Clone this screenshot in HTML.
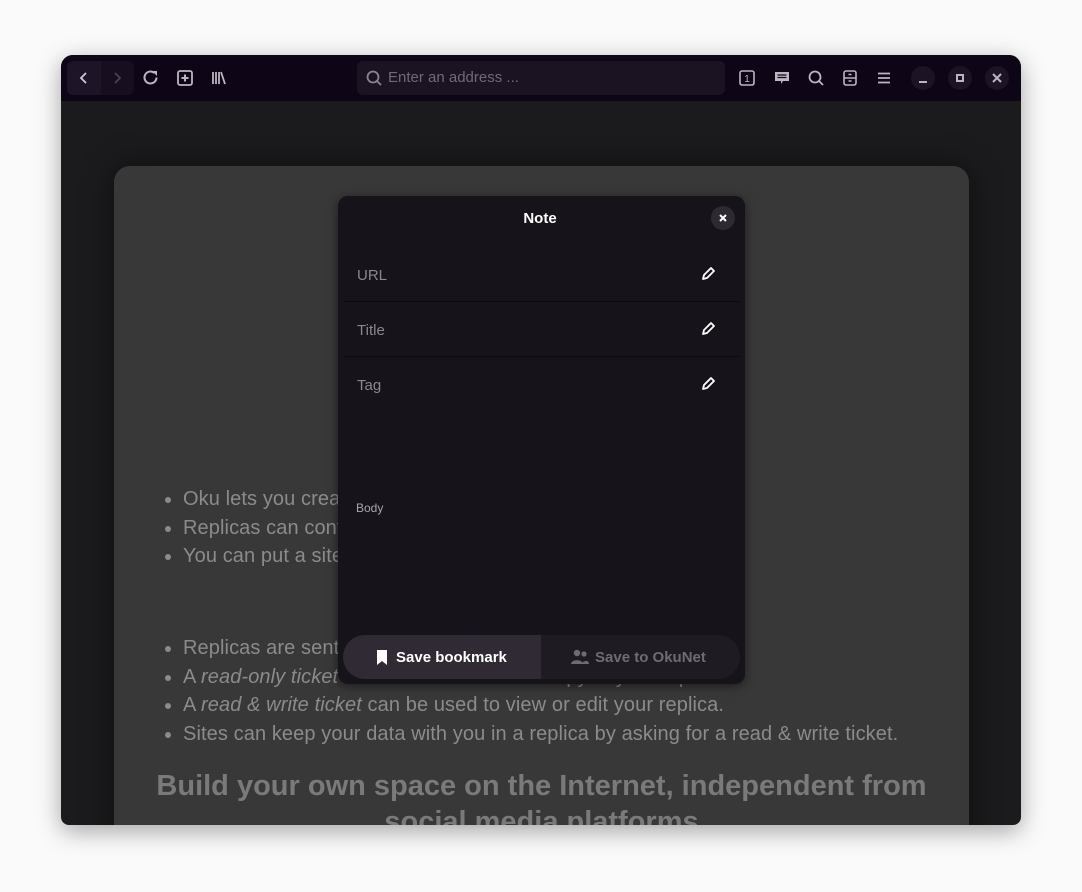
<!DOCTYPE html>
<html><head><meta charset="utf-8"><style>
*{box-sizing:border-box;margin:0;padding:0}
body{width:1082px;height:892px;background:#fafafa;font-family:"Liberation Sans",sans-serif;position:relative;overflow:hidden}
.win{position:absolute;left:61px;top:55px;width:960px;height:770px;border-radius:12px 12px 8px 8px;overflow:hidden;background:#1b1b1d;box-shadow:0 6px 24px rgba(0,0,0,.35)}
.hdr{position:absolute;left:0;top:0;width:960px;height:46px;background:#0e0517}
.ic{position:absolute;top:13px;width:20px;height:20px}
.card{position:absolute;left:53px;top:111px;width:855px;height:700px;background:#383839;border-radius:16px;box-shadow:0 0 30px rgba(0,0,0,.5)}
.t{position:absolute;left:122px;color:#8b8b8c;font-size:20px;letter-spacing:0.1px;white-space:nowrap}
.t:before{content:"";position:absolute;left:-18px;top:9px;width:6px;height:6px;border-radius:3px;background:#8b8b8c}
.h{position:absolute;left:53px;width:855px;text-align:center;color:#7a7a7b;font-size:29px;font-weight:bold}
.modal{position:absolute;left:277px;top:141px;width:407px;height:488px;background:#17131a;border-radius:10px;box-shadow:0 2px 10px rgba(0,0,0,.5)}
.row{position:absolute;left:6px;width:395px;height:55px;border-bottom:1px solid #0c090e;color:#8a878d;font-size:15px}
.row span{position:absolute;left:13px;top:20px}
.row svg{position:absolute;right:23px;top:19px}
</style></head><body>
<div class="win">
 <div class="hdr">
  <div style="position:absolute;left:6px;top:6px;width:67px;height:34px;border-radius:6px;background:#170f20"></div>
  <div style="position:absolute;left:6px;top:6px;width:34px;height:34px;border-radius:6px 0 0 6px;background:#1d1527"></div>
  <svg class="ic" style="left:13px" viewBox="0 0 20 20"><path d="M12 5l-5 5 5 5" stroke="#cfcbd3" stroke-width="1.8" fill="none"/></svg>
  <svg class="ic" style="left:46px" viewBox="0 0 20 20"><path d="M8 5l5 5-5 5" stroke="#4a4452" stroke-width="1.8" fill="none"/></svg>
  <svg class="ic" style="left:80px" viewBox="0 0 20 20"><path d="M15.5 9.5A6 6 0 1 1 13.5 5" stroke="#bbb6c0" stroke-width="2" fill="none"/><path d="M11 3h5v5z" fill="#bbb6c0"/></svg>
  <svg class="ic" style="left:114px" viewBox="0 0 20 20"><rect x="3" y="3" width="14" height="14" rx="2" stroke="#bbb6c0" stroke-width="1.8" fill="none"/><path d="M10 6.5v7M6.5 10h7" stroke="#bbb6c0" stroke-width="2"/></svg>
  <svg class="ic" style="left:148px" viewBox="0 0 20 20"><path d="M4 4v12M7 4v12M10 4v12M12 4l4 12" stroke="#bbb6c0" stroke-width="1.8"/></svg>
  <div style="position:absolute;left:296px;top:6px;width:368px;height:34px;border-radius:6px;background:#1b1322"></div>
  <svg class="ic" style="left:303px" viewBox="0 0 20 20"><circle cx="9" cy="9" r="5.5" stroke="#8a8590" stroke-width="1.8" fill="none"/><path d="M13 13l4 4" stroke="#8a8590" stroke-width="1.8"/></svg>
  <div style="position:absolute;left:327px;top:14px;color:#6f6a75;font-size:15px">Enter an address ...</div>
  <svg class="ic" style="left:676px" viewBox="0 0 20 20"><rect x="3" y="3" width="14" height="14" rx="2" stroke="#bbb6c0" stroke-width="1.6" fill="none"/><text x="10" y="14" font-size="10" fill="#bbb6c0" text-anchor="middle" font-family="Liberation Sans">1</text></svg>
  <svg class="ic" style="left:711px" viewBox="0 0 20 20"><path d="M3 4h14v9h-6l-2 3v-3H3z" fill="#bbb6c0"/><path d="M5.5 7h9M5.5 9.5h9" stroke="#0e0517" stroke-width="1.2"/></svg>
  <svg class="ic" style="left:745px" viewBox="0 0 20 20"><circle cx="9" cy="9" r="5.5" stroke="#bbb6c0" stroke-width="1.8" fill="none"/><path d="M13 13l4 4" stroke="#bbb6c0" stroke-width="1.8"/></svg>
  <svg class="ic" style="left:779px" viewBox="0 0 20 20"><rect x="4" y="3" width="12" height="14" rx="2" stroke="#bbb6c0" stroke-width="1.6" fill="none"/><path d="M4 10h12M8.5 6.5h3M8.5 13h3" stroke="#bbb6c0" stroke-width="1.4"/></svg>
  <svg class="ic" style="left:813px" viewBox="0 0 20 20"><path d="M4 5.5h12M4 10h12M4 14.5h12" stroke="#bbb6c0" stroke-width="1.8"/></svg>
  <div style="position:absolute;left:850px;top:11px;width:24px;height:24px;border-radius:12px;background:#1c1424"></div>
  <div style="position:absolute;left:858px;top:26px;width:8px;height:2px;background:#bbb6c0"></div>
  <div style="position:absolute;left:887px;top:11px;width:24px;height:24px;border-radius:12px;background:#1c1424"></div>
  <div style="position:absolute;left:895px;top:19px;width:8px;height:8px;border:2px solid #bbb6c0"></div>
  <div style="position:absolute;left:924px;top:11px;width:24px;height:24px;border-radius:12px;background:#1c1424"></div>
  <svg style="position:absolute;left:931px;top:18px" width="10" height="10"><path d="M1 1l8 8M9 1l-8 8" stroke="#bbb6c0" stroke-width="2"/></svg>
 </div>
 <div class="card"></div>
 <div class="t" style="top:433px">Oku lets you create replicas and put a site online.</div>
 <div class="t" style="top:462px">Replicas can contain any number of files and documents.</div>
 <div class="t" style="top:490px">You can put a site online with a replica.</div>
 <div class="t" style="top:582px">Replicas are sent to others with tickets.</div>
 <div class="t" style="top:611px">A <i>read-only ticket</i> can be used to view a copy of your replica.</div>
 <div class="t" style="top:639px">A <i>read &amp; write ticket</i> can be used to view or edit your replica.</div>
 <div class="t" style="top:668px">Sites can keep your data with you in a replica by asking for a read &amp; write ticket.</div>
 <div class="h" style="top:715px">Build your own space on the Internet, independent from</div>
 <div class="h" style="top:751px">social media platforms</div>
 <div class="modal">
  <div style="position:absolute;left:0;width:404px;top:14px;text-align:center;color:#fff;font-weight:bold;font-size:15px">Note</div>
  <div style="position:absolute;left:373px;top:10px;width:24px;height:24px;border-radius:12px;background:#2e2a32"></div>
  <svg style="position:absolute;left:381px;top:18px" width="8" height="8"><path d="M1 1l6 6M7 1l-6 6" stroke="#fff" stroke-width="2"/></svg>
  <div class="row" style="top:51px"><span>URL</span><svg width="16" height="16" viewBox="0 0 16 16"><path d="M3 13l1-4 7-7 3 3-7 7z" stroke="#fff" stroke-width="1.8" fill="none" stroke-linejoin="round"/></svg></div>
  <div class="row" style="top:106px"><span>Title</span><svg width="16" height="16" viewBox="0 0 16 16"><path d="M3 13l1-4 7-7 3 3-7 7z" stroke="#fff" stroke-width="1.8" fill="none" stroke-linejoin="round"/></svg></div>
  <div class="row" style="top:161px;border:none"><span>Tag</span><svg width="16" height="16" viewBox="0 0 16 16"><path d="M3 13l1-4 7-7 3 3-7 7z" stroke="#fff" stroke-width="1.8" fill="none" stroke-linejoin="round"/></svg></div>
  <div style="position:absolute;left:18px;top:305px;color:#a8a5ab;font-size:12px">Body</div>
  <div style="position:absolute;left:5px;top:439px;width:397px;height:44px;border-radius:22px;background:#1f1b23;overflow:hidden">
   <div style="position:absolute;left:0;top:0;width:198px;height:44px;background:#2f2a33"></div>
   <svg style="position:absolute;left:33px;top:14px" width="12" height="16"><path d="M1 1h10v15l-5-4-5 4z" fill="#fff"/></svg>
   <div style="position:absolute;left:53px;top:14px;color:#fff;font-weight:bold;font-size:15px">Save bookmark</div>
   <svg style="position:absolute;left:228px;top:14px" width="18" height="16"><circle cx="6" cy="4" r="3.2" fill="#6f6b74"/><circle cx="13" cy="5" r="2.6" fill="#6f6b74"/><path d="M0 15c0-5 12-5 12 0zM11 15c0-3 7-5 7 0z" fill="#6f6b74"/></svg>
   <div style="position:absolute;left:252px;top:14px;color:#6f6b74;font-weight:bold;font-size:15px">Save to OkuNet</div>
  </div>
 </div>
</div>
</body></html>
